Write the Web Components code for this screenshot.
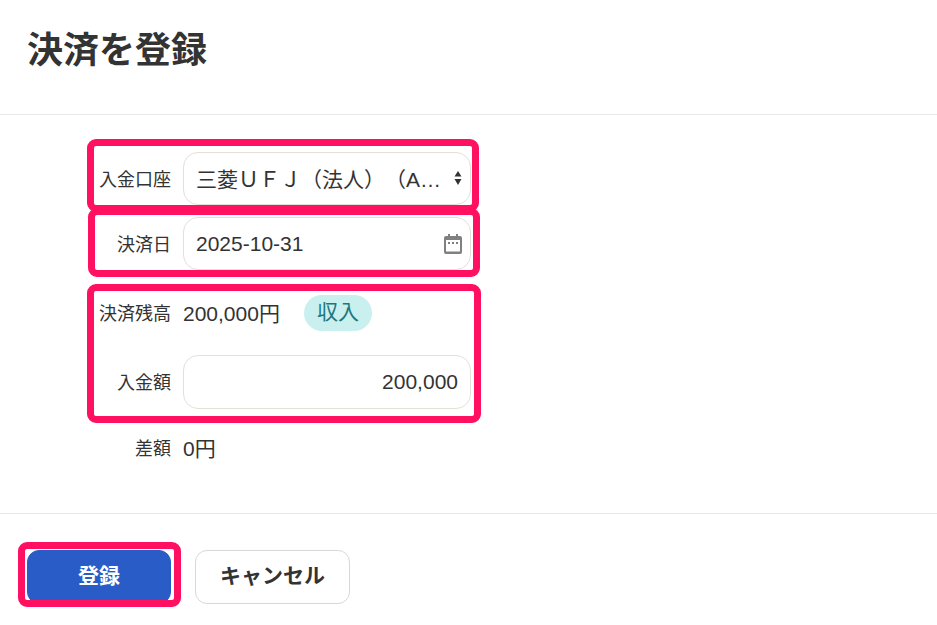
<!DOCTYPE html>
<html lang="ja">
<head>
<meta charset="utf-8">
<title>決済を登録</title>
<style>
  html, body { margin: 0; background: #fff; }
  body {
    position: relative;
    height: 625px;
    overflow: hidden;
    color: #333;
    font-family: "Liberation Sans", "Noto Sans CJK JP", sans-serif;
    text-spacing-trim: space-all;
  }
</style>
</head>
<body>
  <pay-dialog>
    <span slot="title">決済を登録</span>

    <form-row label="入金口座">
      <field-box class="select">
        三菱ＵＦＪ（法人）（A…
        <svg slot="icon" width="8" height="14" viewBox="0 0 8 14"><path d="M4 0 7.5 5.5H.5zM4 14 .5 8h7z" fill="#333"/></svg>
      </field-box>
    </form-row>
    <form-row label="決済日">
      <field-box>
        2025-10-31
        <svg slot="icon" width="18" height="20" viewBox="0 0 18 20"><path fill="#808080" fill-rule="evenodd" d="M4 0h2v2h6V0h2v2h2a2 2 0 0 1 2 2v14a2 2 0 0 1-2 2H2a2 2 0 0 1-2-2V4a2 2 0 0 1 2-2h2zM2 6v11.5h14V6zM4 8h2v2H4zM8 8h2v2H8zM12 8h2v2h-2z"/></svg>
      </field-box>
    </form-row>
    <form-row label="決済残高" class="balance">
      <span>200,000円</span>
      <status-badge>収入</status-badge>
    </form-row>
    <form-row label="入金額" class="amount">
      <field-box align="right">200,000</field-box>
    </form-row>
    <form-row label="差額" class="diff">
      <span>0円</span>
    </form-row>

    <action-button slot="actions" primary>登録</action-button>
    <action-button slot="actions">キャンセル</action-button>
  </pay-dialog>

  <!-- annotation rings drawn on top of the screenshot -->
  <mark-ring style="left:87px;top:139px;width:392px;height:73px"></mark-ring>
  <mark-ring style="left:88px;top:208px;width:392px;height:69px"></mark-ring>
  <mark-ring style="left:87px;top:284px;width:394px;height:139px"></mark-ring>
  <mark-ring style="left:18px;top:542px;width:163px;height:65px"></mark-ring>

<script>
const define = (tag, css, html, extra = {}) => {
  const temp = document.createElement("template");
  temp.innerHTML = `<style>${css}</style>${html}`;
  class El extends HTMLElement {
    constructor() {
      super();
      this.attachShadow({ mode: "open" }).appendChild(temp.content.cloneNode(true));
    }
    connectedCallback() {
      if (extra.connected) extra.connected.call(this);
    }
  }
  customElements.define(tag, El);
};

define("pay-dialog", `
  :host { display: block; }
  header { height: 114px; border-bottom: 1px solid #e8e8e8; padding-left: 27px; }
  h1 { margin: 0; padding-top: 27px; font-size: 36px; line-height: 48px; font-weight: 700; color: #333; }
  main { height: 399px; padding-top: 37px; box-sizing: border-box; display: flex; flex-direction: column; border-bottom: 1px solid #e8e8e8; }
  footer { display: flex; gap: 24px; padding: 36px 0 0 27px; }
`, `
  <header><h1><slot name="title"></slot></h1></header>
  <main><slot></slot></main>
  <footer><slot name="actions"></slot></footer>
`);

define("form-row", `
  :host { display: grid; grid-template-columns: 171px 288px; column-gap: 12px; align-items: center; margin-bottom: 12px; font-size: 21px; color: #333; }
  :host(.balance) { margin: 13px 0 24px; min-height: 36px; }
  label, ::slotted(span) { margin-bottom: 2px; }
  :host(.amount) { margin-bottom: 0; }
  :host(.diff) { margin: 23px 0 0; }
  label { font-size: 18px; text-align: right; }
  .value { display: flex; align-items: center; gap: 24px; min-width: 0; }
`, `
  <label></label><div class="value"><slot></slot></div>
`, {
  connected() { this.shadowRoot.querySelector("label").textContent = this.getAttribute("label"); }
});

define("field-box", `
  :host { flex: 1; display: flex; align-items: center; height: 53px; box-sizing: border-box; padding: 0 8px 0 12px; border: 1px solid #e3e0da; border-radius: 15px; background: #fff; font-size: 21px; white-space: nowrap; }
  :host(.select) { padding-bottom: 2px; }
  :host([align="right"]) { height: 54px; justify-content: flex-end; padding-right: 12px; }
  .text { flex: 1; }
  :host([align="right"]) .text { flex: none; }
  ::slotted(svg) { display: block; }
`, `
  <span class="text"><slot></slot></span><slot name="icon"></slot>
`);

define("status-badge", `
  :host { display: inline-block; width: 68px; height: 36px; line-height: 34px; text-align: center; border-radius: 18px; background: #c9f0ef; color: #20777b; font-size: 21px; }
`, `<slot></slot>`);

define("action-button", `
  :host { display: block; height: 54px; box-sizing: border-box; padding: 0 24px; line-height: 50px; border: 1px solid #d8d8d8; border-radius: 12px; background: #fff; color: #333; font-size: 21px; font-weight: 700; text-align: center; }
  :host([primary]) { width: 144px; border-color: #2a5cc8; background: #2a5cc8; color: #fff; }
`, `<slot></slot>`);

define("mark-ring", `
  :host { position: absolute; box-sizing: border-box; border: 7px solid #ff1060; border-radius: 9px; pointer-events: none; }
`, ``);
</script>
</body>
</html>
